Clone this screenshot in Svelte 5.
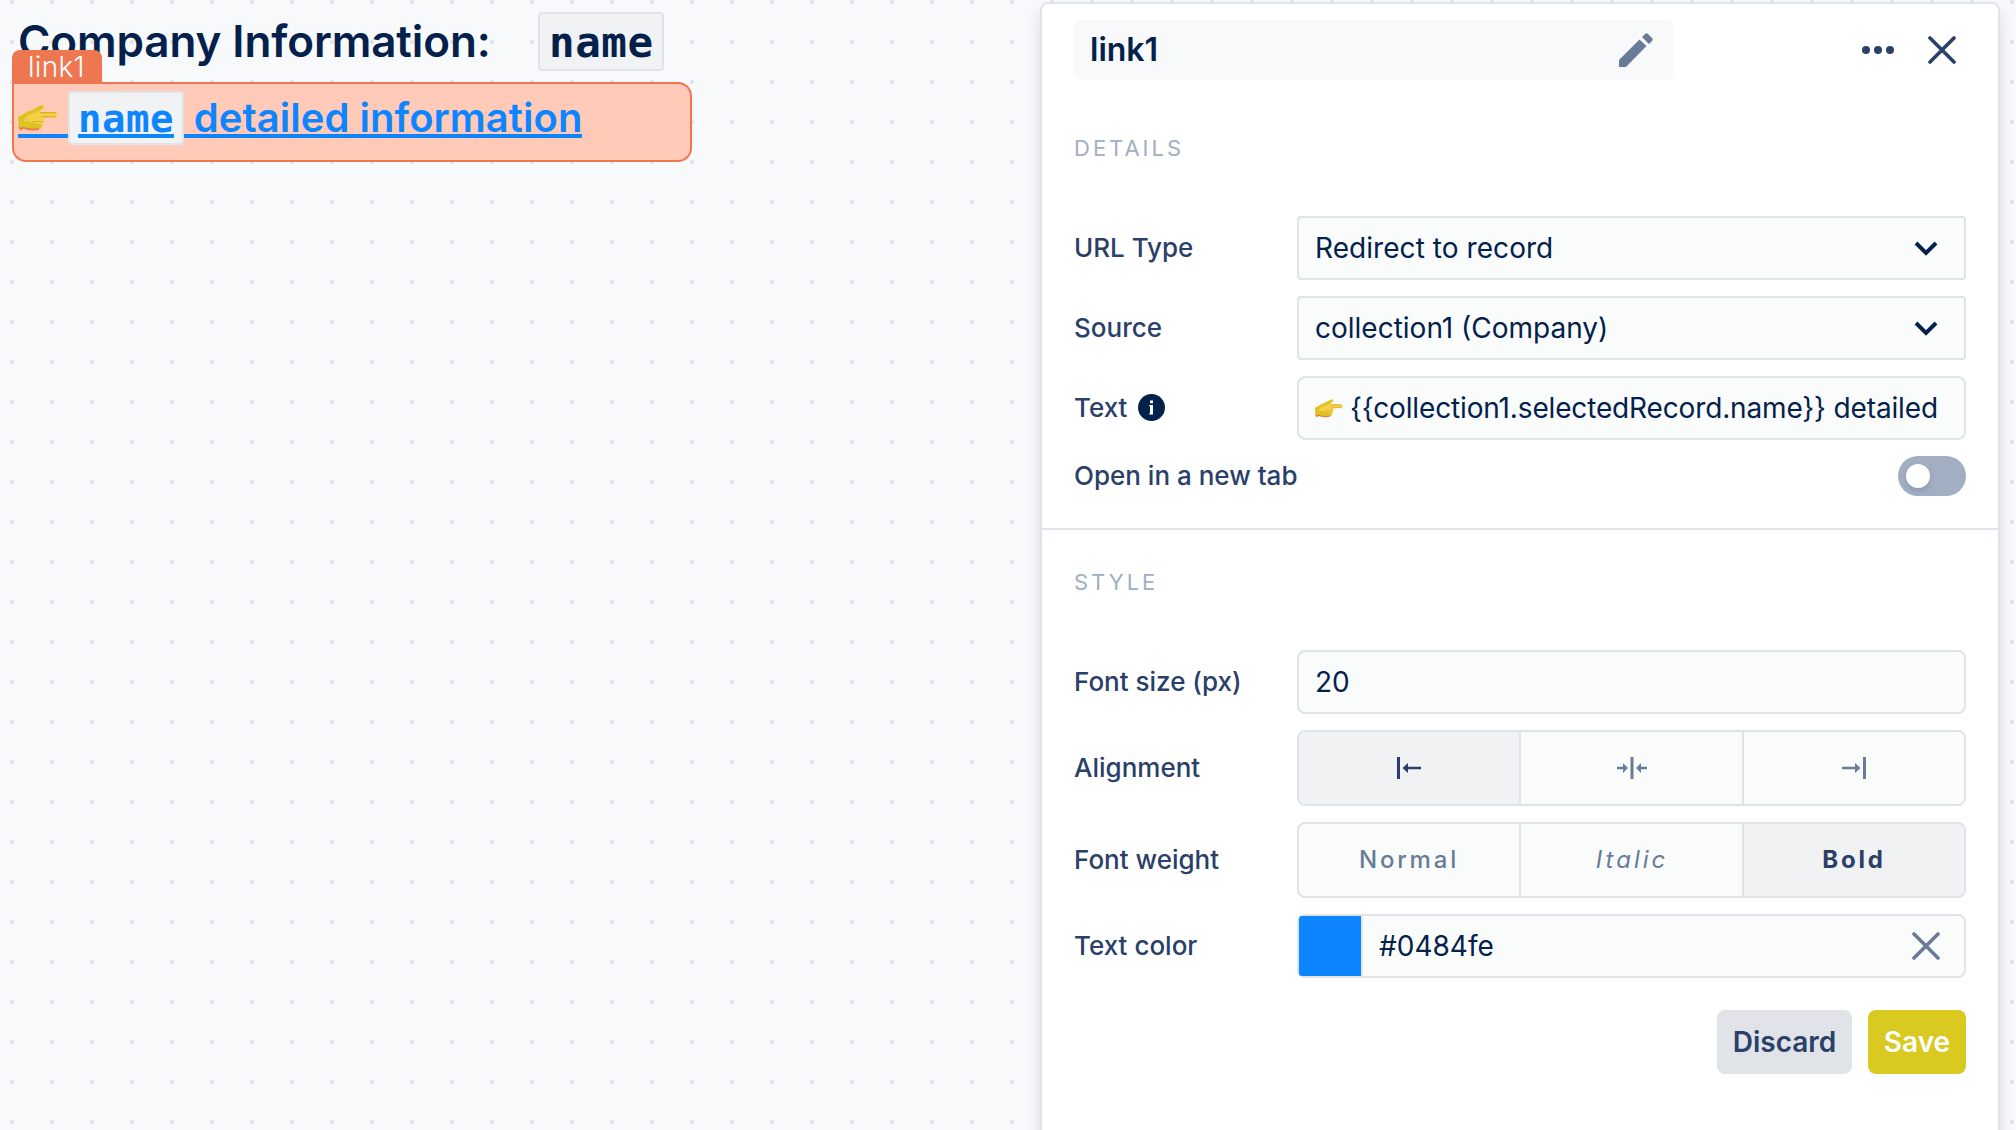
<script>
  const alignments = ['left', 'center', 'right'];
  const weights = ['Normal', 'Italic', 'Bold'];
</script>

{#snippet hand()}
  <svg class="hand" viewBox="0 0 40 26" aria-hidden="true">
    <path d="M0 12 L4 10 C8 8 9 6 13 5.500 L22 1 Q25 -1 26 2 Q26 4 21 7 L37 7.500 Q40 7.700 40 9.500 Q40 11.500 37 11.800 L26 12.500 Q27 15 25.500 17 Q26 19 24.500 20.500 Q24 24 20 24.500 L14 25.500 Q9 25 6 23.500 L1 24 Z" fill="#f6cf48" />
    <path d="M0 12 L4 10 C8 8 9 6 13 5.500 L22 1 Q25 -1 26 2 Q25 4 18 7.500 Q13 10 9 11 L5 16 L14 17 L24 20 Q24 24 20 24 L14 25 Q9 25 6 23 L1 24 Z" fill="#dcc522" />
    <path d="M12 9.500 L22 8 L25 11 L22 16 L14 16 L11 13 Z" fill="#f6cf48" />
    <path d="M22 7.600 H38 M24 11.800 H38 M15 16.500 H25" stroke="#dcb022" stroke-width="1.200" fill="none" />
    <path d="M1 22 L3 24.500 L5 22.500 L9 24 L15 24.500 L21 24" stroke="#f07a50" stroke-width="1.800" fill="none" />
  </svg>
{/snippet}

{#snippet chevron()}
  <svg class="chevron" viewBox="0 0 24 16" aria-hidden="true">
    <path d="M2 3 L12 13 L22 3" fill="none" stroke="currentColor" stroke-width="4" />
  </svg>
{/snippet}

{#snippet cross()}
  <svg class="cross" viewBox="0 0 28 28" aria-hidden="true">
    <path d="M2 2 L26 26 M26 2 L2 26" fill="none" stroke="currentColor" stroke-width="3.600" stroke-linecap="round" />
  </svg>
{/snippet}

<div class="page">
  <main class="canvas">
    <h1>
      <span class="heading-text">Company Information:</span>
      <span class="chip">name</span>
    </h1>
    <div class="component">
      <span class="tag">link1</span>
      <div class="link">
        <span class="lead">{@render hand()}</span>
        <span class="chip"><span class="underlined">name</span></span>
        <span class="rest">&nbsp;detailed information</span>
      </div>
    </div>
  </main>

  <aside class="panel">
    <header>
      <div class="title">
        <span class="title-text">link1</span>
        <svg class="pencil" viewBox="0 0 34 34" aria-hidden="true">
          <path d="M0 27 L20.500 6.500 L27.500 13 L7 34 H0 Z M23 4 L26 1 Q27.500 -0.500 29 1 L33 5 Q34.500 6.500 33 8 L30 11 Z" fill="currentColor" />
        </svg>
      </div>
      <svg class="dots" viewBox="0 0 32 8" aria-hidden="true">
        <circle cx="4" cy="4" r="4" /><circle cx="16" cy="4" r="4" /><circle cx="28" cy="4" r="4" />
      </svg>
      {@render cross()}
    </header>

    <section class="details">
      <h2>DETAILS</h2>
      <div class="row">
        <span class="label">URL Type</span>
        <div class="field select wide">Redirect to record{@render chevron()}</div>
      </div>
      <div class="row">
        <span class="label">Source</span>
        <div class="field select">collection1 (Company){@render chevron()}</div>
      </div>
      <div class="row">
        <span class="label">Text
          <svg class="info" viewBox="0 0 27 27" aria-hidden="true">
            <circle cx="13.500" cy="13.500" r="13.500" fill="#04214b" />
            <path d="M11.300 11 H15 V20.500 H11.300 V19.300 H12 V12.300 H11.300 Z M12 6.500 H15 V9.300 H12 Z" fill="#fff" />
          </svg>
        </span>
        <div class="field formula">{@render hand()}<span>{'{{collection1.selectedRecord.name}} detailed'}</span></div>
      </div>
      <div class="row switch-row">
        <span class="label">Open in a new tab</span>
        <span class="switch"><span class="knob"></span></span>
      </div>
    </section>

    <section class="style">
      <h2>STYLE</h2>
      <div class="row">
        <span class="label">Font size (px)</span>
        <div class="field">20</div>
      </div>
      <div class="row">
        <span class="label">Alignment</span>
        <div class="segments">
          {#each alignments as side}
            <div class="segment" class:active={side === 'left'}>
              <svg class="align" viewBox="0 0 30 22" aria-hidden="true">
                {#if side === 'left'}
                  <path d="M3 0 H6 V22 H3 Z M8.500 11 L14 6 V9.800 H27 V12.200 H14 V16 Z" />
                {:else if side === 'center'}
                  <path d="M13.500 0 H16.500 V22 H13.500 Z M11 11 L6 6 V9.800 H0 V12.200 H6 V16 Z M19 11 L24 6 V9.800 H30 V12.200 H24 V16 Z" />
                {:else}
                  <path d="M24 0 H27 V22 H24 Z M21.500 11 L16 6 V9.800 H3 V12.200 H16 V16 Z" />
                {/if}
              </svg>
            </div>
          {/each}
        </div>
      </div>
      <div class="row">
        <span class="label">Font weight</span>
        <div class="segments">
          {#each weights as weight}
            <div class="segment" class:active={weight === 'Bold'} class:italic={weight === 'Italic'}>{weight}</div>
          {/each}
        </div>
      </div>
      <div class="row">
        <span class="label">Text color</span>
        <div class="field color">
          <span class="swatch"></span>
          <span class="hex">#0484fe</span>
          {@render cross()}
        </div>
      </div>
      <div class="actions">
        <button class="discard">Discard</button>
        <button class="save">Save</button>
      </div>
    </section>
  </aside>
</div>

<style>
  .page {
    box-sizing: border-box;
    display: flex;
    width: 2016px;
    height: 1130px;
    overflow: hidden;
    background: #f8f9fb radial-gradient(circle at 20px 20px, #e0e3e8 0 1.700px, transparent 2.400px) -8px -18px / 40px 40px;
    font-family: Inter, 'Liberation Sans', sans-serif;
    color: #04214b;
  }
  .page :global(*) {
    box-sizing: border-box;
  }
  svg {
    display: block;
    flex: none;
  }

  .canvas {
    flex: none;
    width: 1040px;
    padding: 12px 12px 0;
  }
  h1 {
    display: flex;
    align-items: center;
    height: 58px;
    margin: 0 0 12px;
    padding-left: 6px;
    font-size: 44px;
    font-weight: 600;
    line-height: 58px;
  }
  .heading-text {
    width: 520px;
    letter-spacing: -0.1px;
  }
  .chip {
    display: flex;
    align-items: center;
    width: 126px;
    height: 59px;
    padding: 3px 8px 0 9px;
    border: 2px solid #e0e3e8;
    border-radius: 4px;
    background: #f1f2f4;
    font-family: 'DejaVu Sans Mono', monospace;
    font-size: 42.500px;
    font-weight: 700;
    letter-spacing: 0.600px;
  }
  .component {
    position: relative;
    width: 680px;
    height: 80px;
    padding: 7px 4px 0;
    border: 2px solid #ee7751;
    border-radius: 0 14px 14px 14px;
    background: #ffcab8;
  }
  .tag {
    position: absolute;
    left: -2px;
    top: -34px;
    width: 90px;
    height: 34px;
    padding-left: 16px;
    border-radius: 8px 8px 0 0;
    background: #ee7751;
    color: #fff;
    font-size: 28px;
    font-weight: 300;
    line-height: 34px;
    letter-spacing: 0.300px;
  }
  .link {
    display: flex;
    height: 54px;
    font-size: 40px;
    font-weight: 600;
    line-height: 54px;
    color: #0d85ff;
  }
  .link .chip {
    width: 116px;
    height: 54px;
    padding: 0 8px;
    align-items: flex-start;
    font-size: 39px;
    letter-spacing: 0.500px;
  }
  .lead,
  .rest {
    height: 47px;
    border-bottom: 4px solid #0d85ff;
  }
  .rest {
    letter-spacing: 0.030px;
    text-indent: -0.400px;
  }
  .lead {
    width: 50px;
    padding-top: 14px;
  }
  .lead :global(.hand) {
    width: 40px;
    height: 26px;
  }
  .underlined {
    height: 45px;
    border-bottom: 4px solid #0d85ff;
    line-height: 52px;
  }

  .panel {
    flex: none;
    width: 960px;
    height: 1160px;
    margin-top: 2px;
    border: 2px solid #e0e3e8;
    border-radius: 8px;
    background: #fff;
    box-shadow: 0 8px 14px rgba(4, 33, 75, 0.140);
  }
  header {
    display: flex;
    align-items: center;
    height: 92px;
    padding: 0 42px 0 32px;
    color: #2a4069;
  }
  .title {
    display: flex;
    align-items: center;
    justify-content: space-between;
    width: 600px;
    height: 60px;
    padding: 0 21px 0 16px;
    border-radius: 8px;
    background: #f8f9fb;
    color: #04214b;
    font-size: 32px;
    font-weight: 600;
  }
  .title-text {
    padding-bottom: 1px;
  }
  .pencil {
    width: 34px;
    height: 34px;
    color: #6a7b97;
  }
  .dots {
    width: 32px;
    height: 8px;
    margin-left: auto;
    margin-right: 34px;
    fill: #2a4069;
  }
  .cross {
    width: 28px;
    height: 28px;
  }

  section {
    padding: 0 32px;
  }
  .details {
    height: 434px;
    padding-top: 32px;
    border-bottom: 2px solid #e0e3e8;
  }
  .style {
    padding-top: 32px;
  }
  h2 {
    height: 40px;
    margin: 0 0 48px;
    color: #a2aec2;
    font-size: 22px;
    font-weight: 400;
    line-height: 40px;
    letter-spacing: 3px;
  }
  .row {
    display: flex;
    align-items: center;
    margin-bottom: 16px;
  }
  .label {
    display: flex;
    align-items: center;
    gap: 11px;
    flex: none;
    width: 223px;
    padding-bottom: 2px;
    font-size: 26px;
    font-weight: 500;
    color: #2a4069;
    white-space: nowrap;
  }
  .info {
    width: 27px;
    height: 27px;
  }
  .field {
    display: flex;
    align-items: center;
    width: 669px;
    height: 64px;
    padding: 0 16px;
    border: 2px solid #e0e3e8;
    border-radius: 8px;
    background: #fafcfb;
    font-size: 28px;
    white-space: nowrap;
  }
  .select {
    justify-content: space-between;
    padding-right: 26px;
    border-radius: 4px;
  }
  .wide {
    letter-spacing: 0.060px;
  }
  .chevron {
    width: 24px;
    height: 16px;
  }
  .formula {
    gap: 7px;
    letter-spacing: -0.150px;
  }
  .formula .hand {
    width: 28px;
    height: 19px;
  }
  .switch-row {
    justify-content: space-between;
    height: 40px;
  }
  .switch {
    width: 68px;
    height: 40px;
    padding: 8px;
    border-radius: 20px;
    background: #a2aec2;
  }
  .knob {
    display: block;
    width: 24px;
    height: 24px;
    border-radius: 50%;
    background: #fff;
    box-shadow: 0 3px 5px rgba(80, 110, 150, 0.300);
  }

  .segments {
    display: grid;
    grid-template-columns: 220px 223px 1fr;
    width: 669px;
    height: 76px;
    overflow: hidden;
    border: 2px solid #e0e3e8;
    border-radius: 8px;
    background: #fafcfb;
  }
  .segment {
    display: flex;
    align-items: center;
    justify-content: center;
    padding-bottom: 1px;
    color: #6a7b97;
    font-size: 24px;
    font-weight: 500;
    letter-spacing: 2.800px;
  }
  .segment + .segment {
    border-left: 2px solid #e0e3e8;
  }
  .active {
    background: #f1f2f4;
    color: #2a4069;
    font-weight: 700;
  }
  .italic {
    padding-left: 1px;
    font-style: italic;
    font-weight: 400;
    letter-spacing: 3px;
  }
  .align {
    width: 30px;
    height: 22px;
    fill: currentColor;
  }
  .color {
    padding: 0 24px 0 0;
    color: #04214b;
  }
  .swatch {
    width: 64px;
    height: 60px;
    border-right: 2px solid #e0e3e8;
    border-radius: 3px 0 0 3px;
    background: #0d85ff;
  }
  .hex {
    flex: 1;
    padding-left: 16px;
  }
  .color .cross {
    color: #6a7b97;
  }
  .actions {
    display: flex;
    justify-content: flex-end;
    gap: 16px;
    padding-top: 16px;
  }
  button {
    height: 64px;
    padding: 0;
    border: 0;
    border-radius: 8px;
    font: 600 28px Inter, 'Liberation Sans', sans-serif;
  }
  .discard {
    width: 135px;
    background: #e0e3e8;
    color: #2a4069;
  }
  .save {
    width: 98px;
    background: #d9c920;
    color: #fff;
  }
</style>
